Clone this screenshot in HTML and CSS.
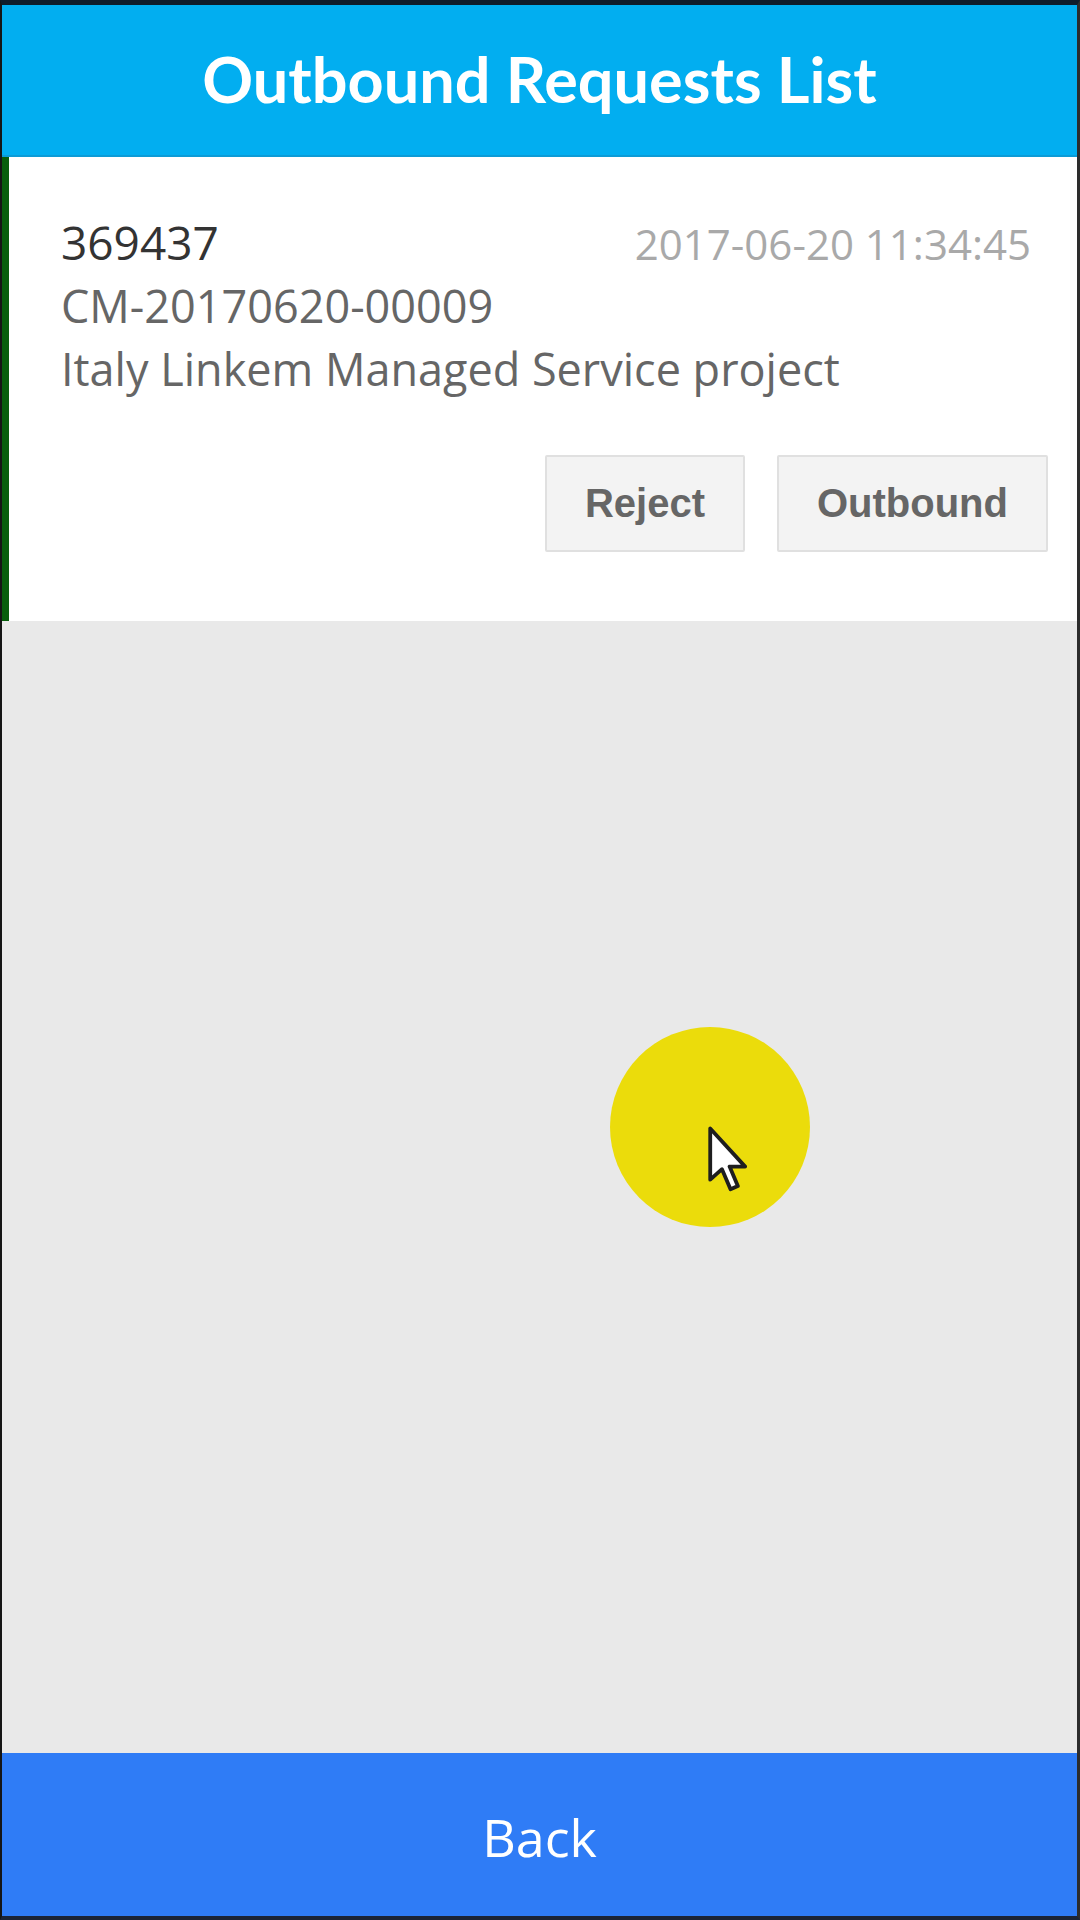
FILE: index.html
```html
<!DOCTYPE html>
<html lang="en">
<head>
<meta charset="utf-8">
<title>Outbound Requests List</title>
<link rel="stylesheet" href="styles.css">
</head>
<body>
<div class="app">
  <header class="topbar">
    <h1 class="title">Outbound Requests List</h1>
  </header>
  <section class="card">
    <div class="row-top">
      <span class="req-id">369437</span>
      <span class="req-date">2017-06-20 11:34:45</span>
    </div>
    <div class="req-code">CM-20170620-00009</div>
    <div class="req-project">Italy Linkem Managed Service project</div>
    <div class="actions">
      <button class="btn">Reject</button>
      <button class="btn">Outbound</button>
    </div>
  </section>
  <main class="empty">
    <div class="touch">
      <svg class="cursor" width="40" height="66" viewBox="0 0 12.6 20.6">
        <path d="M0.7 0.7 L0.7 16.8 L4.4 13.5 L7.1 19.8 L9.4 18.8 L6.8 12.7 L11.7 12.7 Z" fill="#ffffff" stroke="#1e1e1e" stroke-width="1.2" stroke-linejoin="round"/>
      </svg>
    </div>
  </main>
  <footer class="backbar">
    <span class="back-label">Back</span>
  </footer>
</div>
</body>
</html>
```
FILE: styles.css
```css
* { box-sizing: border-box; }
html, body { margin: 0; padding: 0; }
body {
  width: 1080px;
  height: 1920px;
  background: #e9e9e9;
  font-family: "Open Sans", "Noto Sans", sans-serif;
}
.app {
  width: 1080px;
  height: 1920px;
  display: flex;
  flex-direction: column;
  border-top: 5px solid #0f1c2b;
  border-left: 2px solid #151515;
  border-right: 3px solid #2c2c2c;
  border-bottom: 4px solid #1b2436;
  background: #e9e9e9;
}
.topbar {
  height: 152px;
  flex: none;
  background: #02aef0;
  border-bottom: 2px solid #0c9bd6;
  display: flex;
  align-items: center;
  justify-content: center;
}
.title {
  margin: 0;
  padding-bottom: 4px;
  color: #ffffff;
  font-family: Lato, "Open Sans", sans-serif;
  font-weight: 700;
  font-size: 63px;
  line-height: 1;
}
.card {
  flex: none;
  height: 464px;
  background: #ffffff;
  border-left: 7px solid #075e0c;
  padding: 54px 29px 69px 52px;
  display: flex;
  flex-direction: column;
}
.row-top {
  display: flex;
  justify-content: space-between;
  align-items: baseline;
  height: 63px;
  line-height: 63px;
  padding-right: 17px;
}
.req-id {
  font-size: 46px;
  color: #333333;
}
.req-date {
  font-size: 42px;
  color: #a9a9a9;
}
.req-code,
.req-project {
  height: 63px;
  line-height: 63px;
  font-size: 45px;
  color: #666666;
  white-space: nowrap;
}
.actions {
  margin-top: 55px;
  display: flex;
  justify-content: flex-end;
  gap: 32px;
}
.btn {
  height: 97px;
  padding: 0 38px;
  background: #f3f3f3;
  border: 2px solid #e0e0e0;
  border-radius: 2px;
  font-family: "Liberation Sans", Arial, sans-serif;
  font-weight: 700;
  font-size: 40px;
  color: #666666;
}
.empty {
  flex: 1;
  position: relative;
  background: #e9e9e9;
}
.touch {
  position: absolute;
  left: 608px;
  top: 406px;
  width: 200px;
  height: 200px;
  border-radius: 50%;
  background: #ebdc0b;
}
.cursor {
  position: absolute;
  left: 98px;
  top: 99px;
}
.backbar {
  flex: none;
  height: 163px;
  background: #2f7cf6;
  display: flex;
  align-items: center;
  justify-content: center;
}
.back-label {
  color: #ffffff;
  font-size: 52px;
  line-height: 1;
  padding-top: 4px;
}
```
